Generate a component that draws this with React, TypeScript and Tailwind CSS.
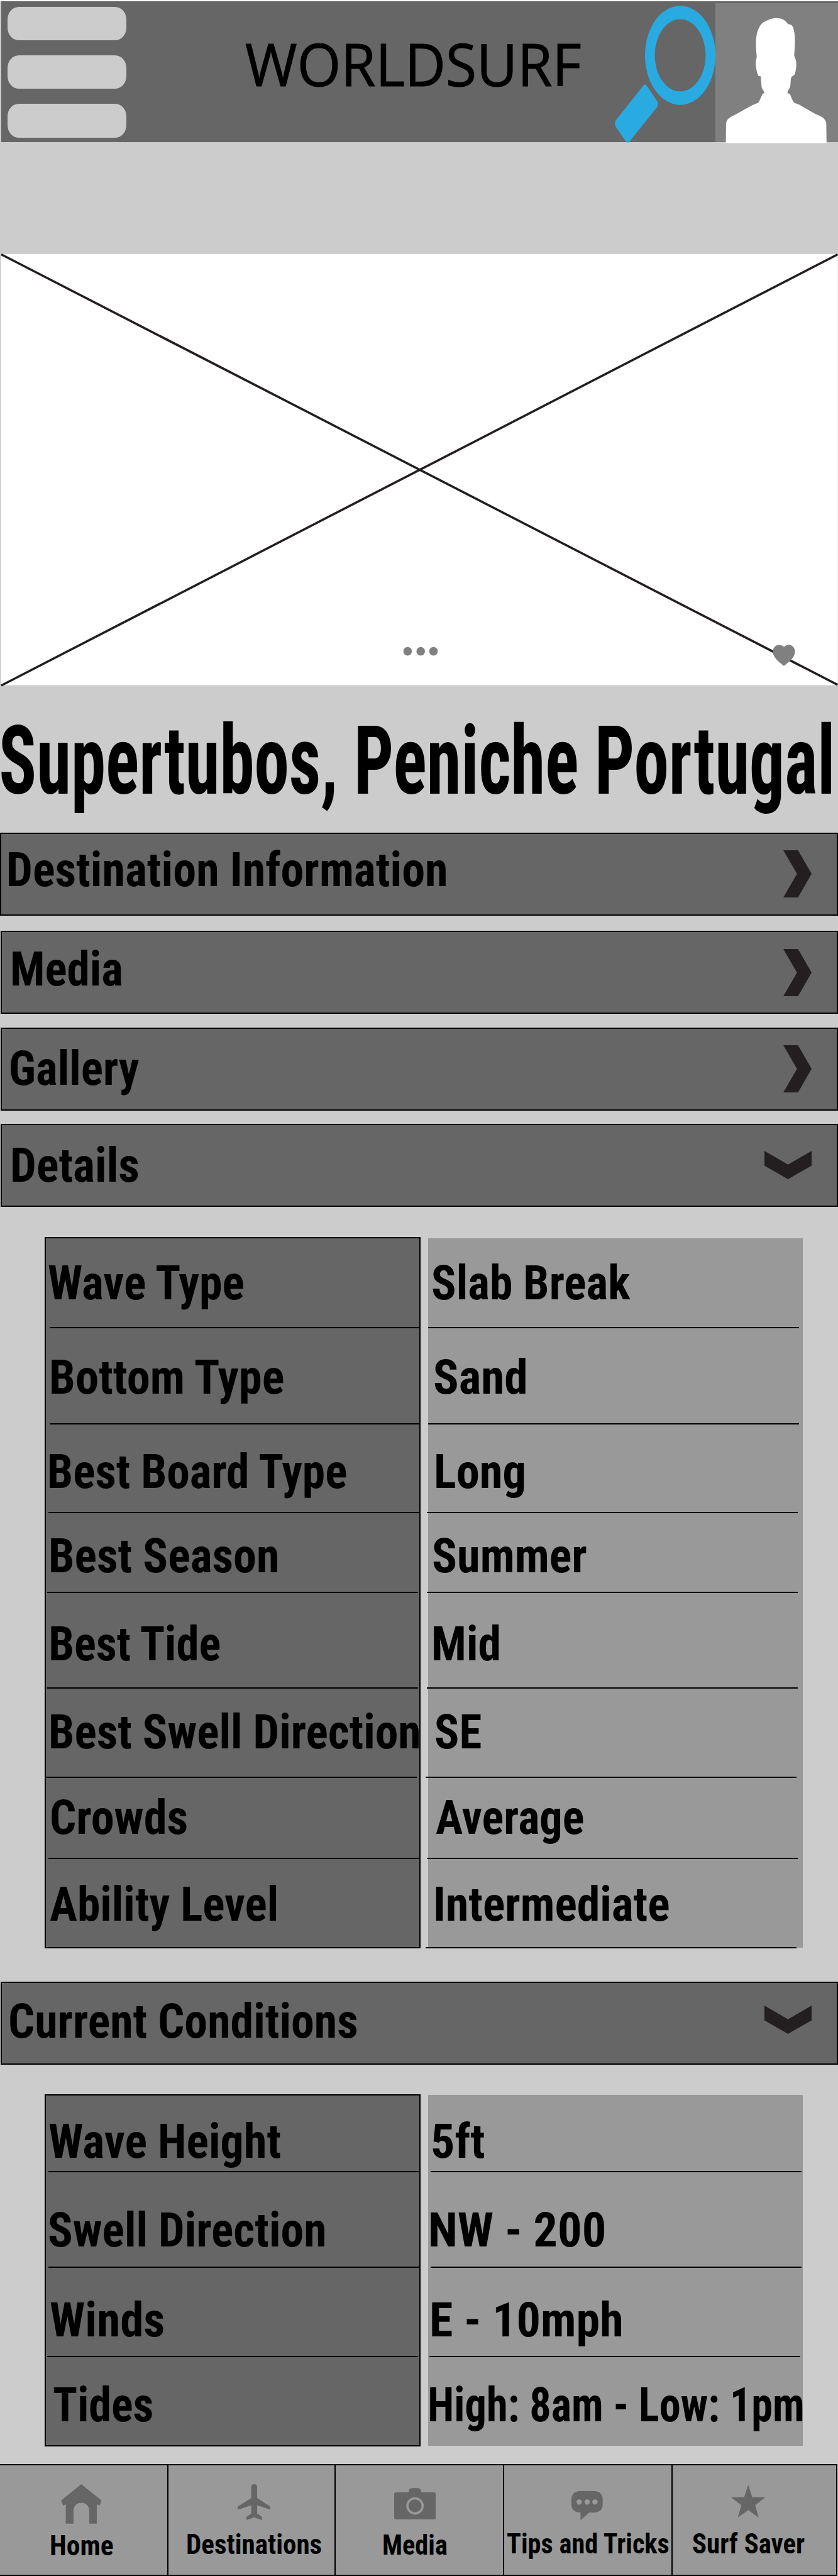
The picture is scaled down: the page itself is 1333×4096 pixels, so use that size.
import { useLayoutEffect, useRef } from "react";
import type { ReactNode } from "react";

type FitProps = {
  text: string;
  width: number;
  className: string;
};

/* One line of text, squeezed horizontally so that its ink spans `width` pixels. */
function Fit({ text, width, className }: FitProps) {
  const ref = useRef<HTMLSpanElement>(null);
  useLayoutEffect(() => {
    const el = ref.current;
    if (!el) return;
    const cs = getComputedStyle(el);
    const ctx = document.createElement("canvas").getContext("2d");
    if (!ctx) return;
    ctx.font = `${cs.fontWeight} ${cs.fontSize} ${cs.fontFamily}`;
    const m = ctx.measureText(text);
    const ink = m.actualBoundingBoxLeft + m.actualBoundingBoxRight;
    el.style.transform = `scaleX(${width / ink}) translateX(${m.actualBoundingBoxLeft}px)`;
  }, [text, width]);
  return (
    <div className={className} style={{ width }}>
      <span ref={ref} className="block w-max origin-left whitespace-nowrap">
        {text}
      </span>
    </div>
  );
}

const bold = "font-['Roboto_Condensed','Roboto',sans-serif] font-bold text-black";

function ChevronRight({ className }: { className: string }) {
  return (
    <svg className={`h-[75px] w-[45px] shrink-0 ${className}`} viewBox="0 0 45 75" preserveAspectRatio="none">
      <path d="M0 0H23.4L45 37.5L23.4 75H0L21.8 37.5Z" fill="#231f20" />
    </svg>
  );
}

function ChevronDown({ className }: { className: string }) {
  return (
    <svg className={`h-[45px] w-[75px] shrink-0 ${className}`} viewBox="0 0 75 45" preserveAspectRatio="none">
      <path d="M0 0L37.5 21.8L75 0V23.4L37.5 45L0 23.4Z" fill="#231f20" />
    </svg>
  );
}

type BarProps = { text: string; width: number; className: string; textClass: string; children: ReactNode };

function Bar({ text, width, className, textClass, children }: BarProps) {
  return (
    <div className={`flex h-[132px] shrink-0 items-start justify-between border-2 border-black bg-[#666] pr-[40px] ${className}`}>
      <Fit text={text} width={width} className={`${bold} text-[75.4px] leading-[75px] ${textClass}`} />
      {children}
    </div>
  );
}

type Cell = { text: string; width: number; row: string; top: string; left: string; line?: string };

function Column({ cells, className }: { cells: Cell[]; className: string }) {
  return (
    <div className={`flex shrink-0 flex-col ${className}`}>
      {cells.map((c) => (
        <div key={c.text} className={`flex shrink-0 flex-col ${c.row}`}>
          <Fit text={c.text} width={c.width} className={`${bold} text-[75.4px] leading-[75px] ${c.top} ${c.left}`} />
          {c.line && <div className={`mt-auto h-[2px] shrink-0 bg-black ${c.line}`} />}
        </div>
      ))}
    </div>
  );
}

const detailLabels: Cell[] = [
  { text: "Wave Type", width: 312, row: "h-[143px]", top: "mt-[34px]", left: "ml-[4px]", line: "ml-[6px] w-[588px]" },
  { text: "Bottom Type", width: 370.5, row: "h-[153px]", top: "mt-[41px]", left: "ml-[9.4px]", line: "ml-[6px] w-[588px]" },
  { text: "Best Board Type", width: 473.4, row: "h-[141px]", top: "mt-[38px]", left: "ml-[6px]", line: "ml-[4px] w-[590px]" },
  { text: "Best Season", width: 360.3, row: "h-[127px]", top: "mt-[31px]", left: "ml-[7.7px]", line: "ml-[2px] w-[590px]" },
  { text: "Best Tide", width: 270.3, row: "h-[152px]", top: "mt-[44px]", left: "ml-[7.7px]", line: "ml-[2px] w-[590px]" },
  { text: "Best Swell Direction", width: 585.6, row: "h-[142px]", top: "mt-[32px]", left: "ml-[7.7px]", line: "ml-0 w-[590px]" },
  { text: "Crowds", width: 215, row: "h-[129px]", top: "mt-[26px]", left: "ml-[8.6px]", line: "ml-[4px] w-[590px]" },
  { text: "Ability Level", width: 360.4, row: "h-[140px]", top: "mt-[35px]", left: "ml-[6px]" },
];

const detailValues: Cell[] = [
  { text: "Slab Break", width: 315.3, row: "h-[143px]", top: "mt-[34px]", left: "ml-[7.3px]", line: "ml-0 w-[590px]" },
  { text: "Sand", width: 145.3, row: "h-[153px]", top: "mt-[41px]", left: "ml-[9.9px]", line: "ml-0 w-[590px]" },
  { text: "Long", width: 140.2, row: "h-[141px]", top: "mt-[38px]", left: "ml-[13.3px]", line: "-ml-[2px] w-[590px]" },
  { text: "Summer", width: 244, row: "h-[127px]", top: "mt-[31px]", left: "ml-[8.2px]", line: "-ml-[2px] w-[590px]" },
  { text: "Mid", width: 103.7, row: "h-[152px]", top: "mt-[44px]", left: "ml-[9px]", line: "-ml-[2px] w-[590px]" },
  { text: "SE", width: 72.3, row: "h-[142px]", top: "mt-[32px]", left: "ml-[12.4px]", line: "-ml-[4px] w-[590px]" },
  { text: "Average", width: 234.5, row: "h-[129px]", top: "mt-[26px]", left: "ml-[11.6px]", line: "-ml-[2px] w-[590px]" },
  { text: "Intermediate", width: 370.5, row: "h-[142px]", top: "mt-[35px]", left: "ml-[11.6px]", line: "-ml-[4px] w-[590px]" },
];

const conditionLabels: Cell[] = [
  { text: "Wave Height", width: 368, row: "h-[122px]", top: "mt-[36px]", left: "ml-[5.2px]", line: "ml-[4px] w-[590px]" },
  { text: "Swell Direction", width: 438.5, row: "h-[152px]", top: "mt-[55px]", left: "ml-[5.2px]", line: "ml-[4px] w-[590px]" },
  { text: "Winds", width: 180.2, row: "h-[142px]", top: "mt-[46px]", left: "ml-[7px]", line: "ml-[2px] w-[590px]" },
  { text: "Tides", width: 157.2, row: "h-[140px]", top: "mt-[39px]", left: "ml-[12px]" },
];

const conditionValues: Cell[] = [
  { text: "5ft", width: 82.5, row: "h-[122px]", top: "mt-[36px]", left: "ml-[7.3px]", line: "ml-[4px] w-[590px]" },
  { text: "NW - 200", width: 276.2, row: "h-[152px]", top: "mt-[55px]", left: "ml-[4px]", line: "ml-[4px] w-[590px]" },
  { text: "E - 10mph", width: 301.7, row: "h-[142px]", top: "mt-[46px]", left: "ml-[5.6px]", line: "ml-[2px] w-[590px]" },
  { text: "High: 8am - Low: 1pm", width: 593.2, row: "h-[140px]", top: "mt-[39px]", left: "ml-[3px]" },
];

type Tab = { text: string; width: number; cell: string; label: string; icon: ReactNode };

const tabs: Tab[] = [
  {
    text: "Home",
    width: 98.6,
    cell: "w-[268px] border-r-2",
    label: "ml-[80.7px] mt-[13px]",
    icon: (
      <svg className="ml-[96.9px] mt-[30.4px] h-[62.7px] w-[64.6px] shrink-0" viewBox="228 272 152 301" preserveAspectRatio="none">
        <path d="M304 272L380 397L372 437L362 423V573H334V478C334 440 322 414 304 414S275 440 275 478V573H246V423L237 437L228 397Z" fill="#666" />
      </svg>
    ),
  },
  {
    text: "Destinations",
    width: 213.2,
    cell: "w-[266px] border-r-2",
    label: "ml-[30px] mt-[17px]",
    icon: (
      <svg className="ml-[110px] mt-[30.4px] h-[57.1px] w-[52.3px] shrink-0" viewBox="889 272 123 274" preserveAspectRatio="none">
        <path d="M940 293C940 279 944 272 951 272S962 279 962 293V377L1012 443V467L962 433V496L980 522V546L951 525L922 546V522L940 496V433L889 467V443L940 377Z" fill="#666" />
      </svg>
    ),
  },
  {
    text: "Media",
    width: 101.1,
    cell: "w-[268px] border-r-2",
    label: "ml-[75.7px] mt-[18.5px]",
    icon: (
      <svg className="ml-[92.7px] mt-[36px] h-[50.2px] w-[66.3px] shrink-0" viewBox="0 0 156 241" preserveAspectRatio="none">
        <path d="M8 34H53L56 14Q58 1 68 1H88Q97 1 99 14L102 34H148Q156 34 156 48V227Q156 241 148 241H8Q0 241 0 227V48Q0 34 8 34Z" fill="#666" />
        <ellipse cx="78" cy="137" rx="28.5" ry="58" fill="#666" stroke="#999" strokeWidth="3.6" vectorEffect="non-scaling-stroke" />
      </svg>
    ),
  },
  {
    text: "Tips and Tricks",
    width: 258,
    cell: "w-[268px] border-r-2",
    label: "ml-[5px] mt-[15.5px]",
    icon: (
      <svg className="ml-[107.2px] mt-[41px] h-[46.3px] w-[49.7px] shrink-0" viewBox="571 323 117 222" preserveAspectRatio="none">
        <path
          fillRule="evenodd"
          d="M602 323H657C675 323 688 349 688 382V427C688 461 675 486 657 486H638L605 545V486H602C584 486 571 461 571 427V382C571 349 584 323 602 323ZM590 406A10 20 0 1 0 610 406A10 20 0 1 0 590 406ZM620 406A10 20 0 1 0 640 406A10 20 0 1 0 620 406ZM649 406A10 20 0 1 0 669 406A10 20 0 1 0 649 406Z"
          fill="#666"
        />
      </svg>
    ),
  },
  {
    text: "Surf Saver",
    width: 177.6,
    cell: "w-[262px] border-r-2",
    label: "ml-[31.7px] mt-[19.5px]",
    icon: (
      <svg className="ml-[92.9px] mt-[31px] h-[52px] w-[54.4px] shrink-0" viewBox="1168 275 128 250" preserveAspectRatio="none">
        <path d="M1232 275L1247 369L1296 371L1258 430L1271 525L1232 469L1193 525L1206 430L1168 371L1217 369Z" fill="#666" />
      </svg>
    ),
  },
];

function Header() {
  return (
    <header className="ml-[2px] flex h-[224px] shrink-0 items-start bg-[#666]">
      <div className="ml-[10px] mt-[8.5px] flex shrink-0 flex-col gap-[23.6px]">
        <div className="h-[53.7px] w-[188.5px] rounded-[18px/20px] bg-[#ccc]" />
        <div className="h-[53.7px] w-[188.5px] rounded-[18px/20px] bg-[#ccc]" />
        <div className="h-[53.7px] w-[188.5px] rounded-[18px/20px] bg-[#ccc]" />
      </div>
      <Fit
        text="WORLDSURF"
        width={532.2}
        className="ml-[190.8px] mt-[52px] shrink-0 font-['Open_Sans',sans-serif] text-[94px] font-normal leading-[95px] text-black [-webkit-text-stroke:1.2px_black]"
      />
      <svg className="ml-[54.8px] mt-[7px] h-[218px] w-[160px] shrink-0" viewBox="0 0 160 218">
        <path
          fillRule="evenodd"
          d="M48 79A56 78.8 0 1 1 160 79A56 78.8 0 1 1 48 79ZM63.5 79A40.5 57.4 0 1 0 144.5 79A40.5 57.4 0 1 0 63.5 79Z"
          fill="#29abe2"
        />
        <path
          d="M45.8 126.5Q48 124 50.2 126.5L67 151.5Q70 156.500 67 161.500L23 216.500Q20.500 219 18 216.500L1.500 192.500Q-1 187.500 1.500 182.500Z"
          fill="#29abe2"
        />
      </svg>
      <div className="mt-[3px] h-[221px] w-[195px] shrink-0 bg-[#808080]">
        <svg className="h-[222.5px] w-[194.2px]" viewBox="1111 19 457 846" preserveAspectRatio="none">
          <path
            d="M1340 109C1362 109 1376 128 1383 146C1397 146 1401 157 1405 183C1411 230 1408 290 1406 335C1407 350 1414 360 1414 387C1414 410 1411 435 1408 450C1402 463 1395 458 1394 476C1391 497 1394 520 1388 534C1383 548 1381 548 1381 564L1390 567C1395 590 1400 610 1406 622L1425 633L1482 686C1502 702 1520 706 1526 743L1527 865H1150L1151 743C1156 708 1175 703 1191 688L1250 635L1271 622C1278 605 1282 585 1287 567L1294 564C1293 548 1288 545 1284 528L1281 462L1272 459C1264 432 1262 400 1262 366C1268 340 1265 340 1264 310C1261 265 1263 220 1268 193C1273 165 1281 145 1292 133C1310 119 1322 109 1340 109Z"
            fill="#fff"
          />
        </svg>
      </div>
    </header>
  );
}

export default function App() {
  return (
    <div className="flex h-[4096px] w-[1333px] flex-col overflow-hidden border-t-2 border-white bg-[#ccc]">
      <Header />

      <svg className="mt-[176px] h-[690px] w-[1333px] shrink-0" viewBox="0 402 1333 690">
        <rect x="1.7" y="403.8" width="1331" height="685.7" fill="#fff" />
        <path d="M2 404.5L1332.5 1089M2 1090L1332.5 404.5" stroke="#231f20" strokeWidth="3.6" />
        <g fill="#808080">
          <circle cx="648.4" cy="1035.6" r="6.8" />
          <circle cx="669.2" cy="1035.6" r="6.8" />
          <circle cx="689.5" cy="1035.6" r="6.8" />
          <path d="M1247 1028.5C1251 1025 1256 1024.7 1260 1027C1265 1030.5 1266 1038 1262.5 1043.5C1259.5 1049 1253.5 1054 1247 1058.7C1240.5 1054 1234.5 1049 1231.5 1043.5C1228 1038 1229 1030.5 1234 1027C1238 1024.7 1243 1025 1247 1028.5Z" />
        </g>
      </svg>

      <h1 className="mt-[42px] flex h-[190px] shrink-0">
        <Fit text="Supertubos, Peniche Portugal" width={1320.3} className={`${bold} ml-[1.7px] text-[152px] leading-[152px]`} />
      </h1>

      <Bar text="Destination Information" width={695.5} className="" textClass="ml-[12.4px] mt-[20px]">
        <ChevronRight className="mt-[26px]" />
      </Bar>
      <Bar text="Media" width={174.3} className="ml-[1px] mt-[24px]" textClass="ml-[16.5px] mt-[22px]">
        <ChevronRight className="mt-[26.6px]" />
      </Bar>
      <Bar text="Gallery" width={204} className="ml-[1px] mt-[22px]" textClass="ml-[14px] mt-[26px]">
        <ChevronRight className="mt-[26px]" />
      </Bar>
      <Bar text="Details" width={199.8} className="ml-[1px] mt-[21px]" textClass="ml-[16.5px] mt-[27px]">
        <ChevronDown className="mt-[41px]" />
      </Bar>

      <section className="mt-[48px] flex h-[1131px] shrink-0 items-start">
        <Column cells={detailLabels} className="ml-[71px] h-[1131px] w-[598px] border-2 border-black bg-[#666]" />
        <Column cells={detailValues} className="ml-[12px] mt-[2px] h-[1128px] w-[596px] bg-[#999]" />
      </section>

      <Bar text="Current Conditions" width={551.6} className="ml-[1px] mt-[53px]" textClass="ml-[13px] mt-[24px]">
        <ChevronDown className="mt-[36.4px]" />
      </Bar>

      <section className="mt-[47px] flex h-[560px] shrink-0 items-start">
        <Column cells={conditionLabels} className="ml-[71px] h-[560px] w-[598px] border-2 border-black bg-[#666]" />
        <Column cells={conditionValues} className="ml-[12px] mt-px h-[558px] w-[596px] bg-[#999] pt-px" />
      </section>

      <nav className="mt-[28px] flex h-[178px] w-[1332px] shrink-0 border-b-2 border-t-2 border-black bg-[#999]">
        {tabs.map((t) => (
          <div key={t.text} className={`flex shrink-0 flex-col border-black ${t.cell}`}>
            {t.icon}
            <Fit text={t.text} width={t.width} className={`${bold} text-[44px] leading-[44px] ${t.label}`} />
          </div>
        ))}
      </nav>
    </div>
  );
}
